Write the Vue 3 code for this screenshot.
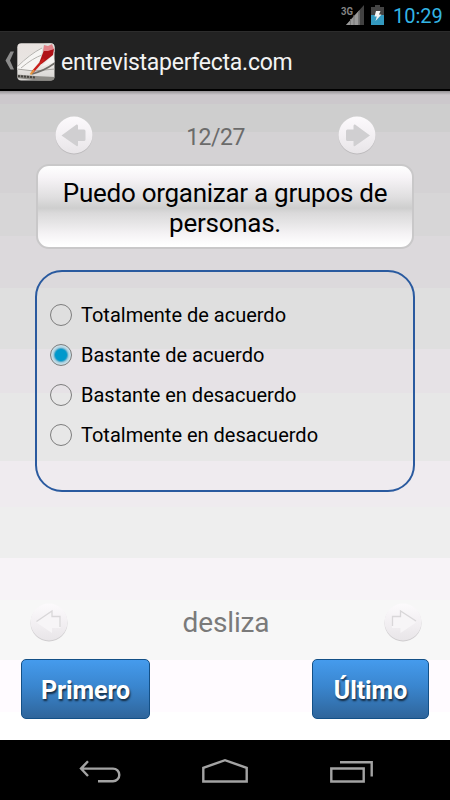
<script setup>
import { ref } from 'vue'

const options = [
  'Totalmente de acuerdo',
  'Bastante de acuerdo',
  'Bastante en desacuerdo',
  'Totalmente en desacuerdo'
]
const selected = ref(1)
</script>

<template>
  <div class="phone">
    <div class="status">
      <svg class="signal" width="30" height="24" viewBox="0 0 30 24">
        <text x="0" y="11.5" class="net" textLength="12" lengthAdjust="spacingAndGlyphs">3G</text>
        <path d="M5 22L23 2V22Z" fill="#424242" />
        <path d="M5 22L18.5 7V22Z" fill="#999" />
        <path d="M9.5 16V22M13 12V22M17.5 8V22" stroke="#777" stroke-width="1" />
      </svg>
      <svg class="battery" width="13" height="20" viewBox="0 0 13 20">
        <path d="M0 2H4V0H9V2H13V10H0Z" fill="#444" />
        <path d="M0 10H13V20H0Z" fill="#3399bf" />
        <path d="M5 6H9.5L8 9.5H10.5L4.5 16L5.8 11.5H3.5Z" fill="#f4f4f4" />
      </svg>
      <span class="clock">10:29</span>
    </div>

    <header class="bar">
      <svg class="up" width="10" height="19" viewBox="0 0 10 19">
        <path d="M5.5 0.5H9L5 9.5L9 18.5H5.5L0.5 9.5Z" fill="#8c8c8c" />
      </svg>
      <svg class="logo" width="38" height="38" viewBox="0 0 38 38">
        <defs>
          <clipPath id="logoClip"><rect x="0.3" y="0.3" width="37.2" height="37.2" rx="4" /></clipPath>
          <linearGradient id="paper" x1="0" y1="0" x2="0" y2="1">
            <stop offset="0" stop-color="#e8e2df" />
            <stop offset="0.6" stop-color="#e9e6e3" />
            <stop offset="1" stop-color="#d5d3d0" />
          </linearGradient>
        </defs>
        <g clip-path="url(#logoClip)">
          <rect width="38" height="38" fill="url(#paper)" />
          <path d="M0 24Q13 10 25 5L25 15L16 27L0 27Z" fill="#f6f5f3" />
          <path d="M0 24Q13 11 25 5M4 25Q16 15 25 12" stroke="#b4b2ae" stroke-width="1" fill="none" />
          <path d="M26 1L38 0V9L24 14Z" fill="#dde3df" />
          <path d="M36 12L24 24L38 19Z" fill="#f6f4f2" />
          <path d="M0 26L17 28L38 26" stroke="#a5a39f" stroke-width="1" fill="none" />
          <path d="M15 31Q27 28 38 20" stroke="#716f6a" stroke-width="1.8" fill="none" />
          <path d="M0 31.5L18 33L38 34V38H24L0 35Z" fill="#8d8b86" />
          <path d="M1 33L18 34.5" stroke="#45433f" stroke-width="2" stroke-dasharray="2 1" />
          <path d="M27 7L37 6L36 12L24.5 21L22.5 19Z" fill="#b01218" />
          <path d="M27 2L31 3L35 1L37 6L31 8L26 8Z" fill="#e2848a" />
          <path d="M27 16L15.5 29" stroke="#c81f1b" stroke-width="2.4" />
          <path d="M17 27L13.5 31.5" stroke="#e3943c" stroke-width="2" />
        </g>
      </svg>
      <span class="title">entrevistaperfecta.com</span>
    </header>

    <main class="content">
      <div class="pager">
        <svg class="round" width="40" height="40" viewBox="0 0 40 40">
          <defs>
            <linearGradient id="disc" x1="0" y1="0" x2="0" y2="1">
              <stop offset="0" stop-color="#fcfafc" />
              <stop offset="0.5" stop-color="#f3f0f3" />
              <stop offset="1" stop-color="#e8e5e8" />
            </linearGradient>
          </defs>
          <circle cx="20" cy="21" r="18.5" fill="#bdbbbd" />
          <circle cx="20" cy="20" r="18.5" fill="url(#disc)" />
          <path d="M7.5 20.5L22.5 9.5Q24 9 24 11V14.5H30Q31.5 14.5 31.5 16V24.5Q31.5 26 30 26H24V30Q24 32 22.5 31Z" fill="#d0cfd1" />
        </svg>
        <span class="count">12/27</span>
        <svg class="round" width="40" height="40" viewBox="0 0 40 40">
          <circle cx="20" cy="21" r="18.5" fill="#bdbbbd" />
          <circle cx="20" cy="20" r="18.5" fill="url(#disc)" />
          <path d="M33 20.5L18 9.5Q16.5 9 16.5 11V14.5H10.5Q9 14.5 9 16V24.5Q9 26 10.5 26H16.5V30Q16.5 32 18 31Z" fill="#d0cfd1" />
        </svg>
      </div>

      <div class="question">Puedo organizar a grupos de<br />personas.</div>

      <div class="answers">
        <div v-for="(o, i) in options" :key="i" class="answer" @click="selected = i">
          <span class="radio" :class="{ on: selected === i }"></span>
          <span>{{ o }}</span>
        </div>
      </div>

      <div class="slide">
        <svg class="round" width="40" height="40" viewBox="0 0 40 40">
          <circle cx="20" cy="21" r="18.5" fill="#cfcdcf" />
          <circle cx="20" cy="20" r="18.5" fill="url(#disc)" />
          <path d="M7.5 20.5L23 9V14.5H31.5V26H23V31Z" fill="#f7f5f7" />
          <path d="M7.5 19.5L23 9V14.5H31V25" fill="none" stroke="#d9d7d9" stroke-width="1.3" />
        </svg>
        <span class="hint">desliza</span>
        <svg class="round" width="40" height="40" viewBox="0 0 40 40">
          <circle cx="20" cy="21" r="18.5" fill="#cfcdcf" />
          <circle cx="20" cy="20" r="18.5" fill="url(#disc)" />
          <path d="M33 20.5L17.5 9V14.5H9V26H17.5V31Z" fill="#f7f5f7" />
          <path d="M9.5 24V14.5H17.5V9L33 19" fill="none" stroke="#d9d7d9" stroke-width="1.3" />
        </svg>
      </div>

      <div class="buttons">
        <button class="btn first">Primero</button>
        <button class="btn last">Último</button>
      </div>
    </main>

    <nav class="navbar">
      <svg width="450" height="60" viewBox="0 0 450 60" fill="none" stroke="#a3a3a3" stroke-width="2.4">
        <path d="M88 21.2L81 28.6L88 36M81.5 28.6H113A6.3 6.3 0 0 1 113 41.2H98" />
        <path d="M203.3 41.5V27.8L225 20.2L246.7 27.8V41.5Z" />
        <path d="M331.3 28.5H363.7V41.5H331.3ZM340 22.2H371.7V36.5" />
      </svg>
    </nav>
  </div>
</template>

<style>
body {
  margin: 0;
  background: #000;
}
</style>

<style scoped>
.phone {
  width: 450px;
  height: 800px;
  display: flex;
  flex-direction: column;
  overflow: hidden;
  background: #000;
  font-family: Roboto, "Liberation Sans", sans-serif;
}

svg {
  display: block;
  flex: none;
}

.status {
  height: 31px;
  display: flex;
  justify-content: flex-end;
  align-items: flex-start;
  box-sizing: border-box;
  padding: 3px 7px 0 0;
}
.net {
  font: bold 11px Roboto, sans-serif;
  fill: #858585;
}
.battery {
  margin: 2px 9px 0 1px;
}
.signal {
  margin-right: -1px;
}
.clock {
  color: #33b5e5;
  font-size: 20px;
  line-height: 26px;
  width: 50px;
  white-space: nowrap;
}

.bar {
  height: 60px;
  box-sizing: border-box;
  flex: none;
  display: flex;
  align-items: center;
  background: #222;
  border-top: 1px solid #2c2c2c;
  border-bottom: 2px solid #000;
  padding-left: 5px;
}
.logo {
  margin: 2px 6px 0 2px;
}
.title {
  color: #f3f3f3;
  font-size: 23px;
  letter-spacing: -0.26px;
  line-height: 30px;
  margin-top: 5px;
}

.content {
  height: 649px;
  flex: none;
  box-sizing: border-box;
  padding-top: 24px;
  /* banded grey backdrop */
  background:
    linear-gradient(#0004, #0000) 0 0 / 100% 4px no-repeat,
    linear-gradient(
      #ccc8cc 13px, #cecece 13px 41px, #d4d2d4 41px 102px, #d7d6d7 102px 145px,
      #dcd9dc 145px 197px, #dfdfdf 197px 258px, #e6e2e6 258px 302px,
      #e7e7e7 302px 370px, #efebef 370px 416px, #eee 416px 467px,
      #f7f3f7 467px 509px, #f7f7f7 509px 569px, #fffbff 569px 621px, #fff 621px
    );
}

.pager {
  display: flex;
  align-items: center;
  justify-content: space-between;
  height: 40px;
  padding: 0 73px 0 54px;
}
.count {
  color: #6b6b6b;
  font-size: 23px;
  letter-spacing: -0.5px;
  margin-top: 5px;
}

.question {
  height: 85px;
  box-sizing: border-box;
  margin: 9px 36px 0;
  padding-top: 13px;
  border: 2px solid #c9c8c9;
  border-radius: 13px;
  background: linear-gradient(#fff, #f7f4f7 14%, #e0dfe0 38%, #cecece 52%, #dad9da 58%, #e6e5e6 70%, #f5f3f5 84%, #fff 98%);
  text-align: center;
  font-size: 26px;
  letter-spacing: -0.27px;
  line-height: 29.5px;
  color: #000;
}

.answers {
  height: 222px;
  box-sizing: border-box;
  margin: 21px 35px 0;
  padding: 22.5px 0 0 13px;
  border: 2px solid #2a5a9f;
  border-radius: 27px;
}
.answer {
  display: flex;
  align-items: center;
  height: 40px;
  font-size: 20px;
  color: #000;
}
.radio {
  width: 22px;
  height: 22px;
  box-sizing: border-box;
  border: 1px solid #7d7d7d;
  border-radius: 50%;
  margin-right: 9px;
}
.radio.on {
  background: radial-gradient(circle, #0099cc 5.5px, #4fa9ca 6.5px, #9fcbdd 7.5px, #c6dde7 9px);
}

.slide {
  display: flex;
  align-items: center;
  justify-content: space-between;
  height: 40px;
  margin-top: 110px;
  padding: 0 27px 0 29px;
}
.hint {
  color: #7a7a7a;
  font-size: 28px;
  letter-spacing: -0.15px;
}

.buttons {
  display: flex;
  justify-content: space-between;
  margin: 17px 21px 0;
}
.btn {
  height: 60px;
  padding: 3px 0 0;
  border: 1px solid #135087;
  border-radius: 5px;
  background: linear-gradient(#459bed, #3a86cf 45%, #2f659b);
  color: #fff;
  font-family: inherit;
  font-size: 25px;
  font-weight: bold;
  letter-spacing: -0.1px;
  text-shadow: 1px 2px 2px #000a;
}
.first {
  width: 129px;
}
.last {
  width: 117px;
}

.navbar {
  height: 60px;
  flex: none;
  background: #000;
}
</style>
